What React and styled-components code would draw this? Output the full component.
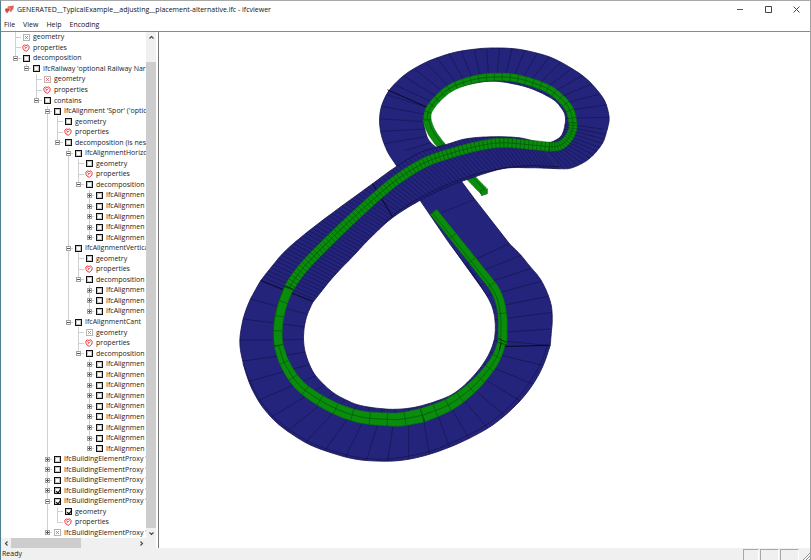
import React from "react";
import styled, { createGlobalStyle, css } from "styled-components";

const GlobalStyle = createGlobalStyle`
  * { box-sizing: border-box; }
  body { margin: 0; background: #fff; }
`;

const Window = styled.main`
  display: flex;
  flex-direction: column;
  height: 100vh;
  min-height: 520px;
  overflow: hidden;
  background: #fff;
  color: #222;
  font: 7px/10px "Open Sans", "Noto Sans", sans-serif;
  border-top: 1px solid #a8a8a8;
  border-left: 1px solid #4e7f95;
  border-right: 1px solid #a0a0a0;
`;
const TitleBar = styled.header`
  display: flex;
  align-items: center;
  flex: 0 0 17px;
  padding-left: 4px;
`;
const Title = styled.h1`
  flex: 1;
  margin: 0 0 0 3px;
  font-size: 7px;
  line-height: 12px;
  font-weight: 400;
  color: #111;
  white-space: nowrap;
`;
const WindowButton = styled.button`
  display: flex;
  align-items: center;
  justify-content: center;
  width: 28px;
  height: 16px;
  padding: 0;
  border: 0;
  background: none;
`;
const MenuBar = styled.nav`
  display: flex;
  flex: 0 0 13px;
  gap: 6px;
  padding-left: 2px;
`;
const MenuButton = styled.button`
  padding: 0 1px;
  border: 0;
  background: none;
  color: #111;
  font: inherit;
  line-height: 12px;
`;
const Body = styled.div`
  display: flex;
  flex: 1;
  min-height: 0;
`;
const Sidebar = styled.aside`
  display: grid;
  grid-template: minmax(0, 1fr) 10px / minmax(0, 1fr) 10px;
  width: 157px;
  padding-right: 2px;
  border-top: 1px solid #8a8a8a;
`;
const Tree = styled.ul`
  display: flex;
  flex-direction: column;
  min-width: 0;
  margin: 0;
  padding: 0 0 0 9px;
  list-style: none;
  overflow: hidden;
`;
const Row = styled.li`
  display: flex;
  flex: 1;
  min-height: 0;
  align-items: stretch;
`;
const Guide = styled.span`
  display: flex;
  flex: none;
  align-items: center;
  justify-content: center;
  width: ${(p) => p.$width}px;
  background-repeat: no-repeat;
  ${(p) => {
    const ink = "linear-gradient(#d0d0d0, #d0d0d0)";
    if (p.$kind === "none") return "";
    const height = p.$kind === "ell" ? "50%" : "100%";
    if (p.$kind === "line")
      return css`background-image: ${ink}; background-size: 1px 100%; background-position: 5px 0;`;
    return css`
      background-image: ${ink}, ${ink};
      background-size: 1px ${height}, 6px 1px;
      background-position: 5px 0, 5px 50%;
    `;
  }}
`;
const Expander = styled.button`
  display: block;
  width: 5px;
  height: 5px;
  padding: 0;
  border: 1px solid #a2a2a2;
  background-color: #fff;
  background-image: linear-gradient(#555, #555), linear-gradient(#555, #555);
  background-position: center;
  background-repeat: no-repeat;
  background-size: 3px 1px, ${(p) => (p.$open ? "0 0" : "1px 3px")};
`;
const NodeLabel = styled.label`
  display: flex;
  align-items: center;
  color: #222;
  white-space: nowrap;
`;
const IconCell = styled.span`
  display: flex;
  align-items: center;
  justify-content: center;
  width: 10px;
  margin-right: 2px;
`;
const Tick = styled.input`
  appearance: none;
  position: relative;
  width: 7px;
  height: 7px;
  margin: 0;
  border: 1px solid #111;
  box-shadow: inset 0 0 0 1px #c4c4c4;
  background: #fff;
  &:checked::after {
    content: "";
    position: absolute;
    left: 2px;
    top: 0;
    width: 2px;
    height: 4px;
    border: solid #000;
    border-width: 0 1px 1px 0;
    transform: rotate(40deg);
  }
`;
const ScrollBar = styled.div`
  display: flex;
  flex-direction: ${(p) => (p.$vertical ? "column" : "row")};
  background: #f0f0f0;
  grid-column: ${(p) => (p.$vertical ? 2 : "1 / 2")};
`;
const ScrollButton = styled.button`
  display: flex;
  flex: 0 0 10px;
  align-items: center;
  justify-content: center;
  padding: 0;
  border: 0;
  background: none;
`;
const Track = styled.div`
  display: flex;
  flex: 1;
  flex-direction: inherit;
`;
const Thumb = styled.div`
  flex: 0 0 ${(p) => p.$size};
  margin-top: ${(p) => p.$before || 0};
  background: #cdcdcd;
`;
const Corner = styled.div`
  background: #f0f0f0;
`;
const Viewport = styled.section`
  flex: 1;
  min-width: 0;
  border-top: 1px solid #8a8a8a;
  border-left: 1px solid #777;
  background: #fff;
`;
const Scene = styled.svg`
  display: block;
  width: 100%;
  height: 100%;
`;
const StatusBar = styled.footer`
  display: flex;
  flex: 0 0 12px;
  align-items: stretch;
  background: #f0f0f0;
  padding: 1px 0 0 1px;
  color: #222;
`;
const StatusText = styled.span`
  flex: 1;
`;
const StatusPane = styled.span`
  width: ${(p) => p.$width}px;
  margin-right: 1px;
  border-top: 1px solid #a8a8a8;
  border-left: 1px solid #a8a8a8;
  border-right: 1px solid #fff;
`;

const AppIcon = () => (
  <svg width="9" height="9" viewBox="0 0 9 9" aria-hidden="true">
    <path d="M2.6 1.6 8.8.6 8.3 4.6 6.9 4.9 6.4 6.9 5.3 7 5.2 5.4 3 5.6z" fill="#e0604c" />
    <path d="M.3 3.6 4.6 3.2 4.3 6.2 2.9 6.5 2.5 8.2 1.4 8.3 1.3 6.6.2 6.5z" fill="#c8483a" />
    <path d="M2.4 3.2 5 2.9 4.7 5.6" fill="none" stroke="#f7b6a8" strokeWidth=".6" />
  </svg>
);
const BlockedIcon = () => (
  <svg width="7" height="7" viewBox="0 0 7 7" aria-hidden="true">
    <rect x=".5" y=".5" width="6" height="6" fill="#fff" stroke="#b5b5b5" />
    <path d="M2.2 2.2 4.8 4.8M4.8 2.2 2.2 4.8" stroke="#f05858" strokeWidth="1" />
  </svg>
);
const PropertiesIcon = () => (
  <svg width="8" height="8" viewBox="0 0 8 8" fill="none" stroke="#f0383c" aria-hidden="true">
    <path d="M.8 2.2 2.3.9 4 1.5 5.7.8 7.2 2.6 6.8 5.2 4.5 7.2 2.4 6.6 1.1 4.5z" strokeWidth="1" />
    <path d="M2.2 2.3 4 3.9 5.7 2.4M4 3.9 2.5 5" strokeWidth=".8" />
  </svg>
);
const Chevron = ({ d }) => (
  <svg width="7" height="7" viewBox="0 0 7 7" fill="none" stroke="#444" strokeWidth="1.1" aria-hidden="true">
    <path d={d} />
  </svg>
);

/* Each entry: depth, label, icon, expander state, last child flag. */
const row = (depth, label, icon = "box", open = null, last = false) => ({ depth, label, icon, open, last });
const leaves = (depth, icon, last = false) => [
  row(depth, "geometry", icon),
  row(depth, "properties", "props", null, last),
];
const many = (count, depth, label) =>
  Array.from({ length: count }, (_, i) => row(depth, label, "box", false, i === count - 1));

const rows = [
  ...leaves(0, "blocked"),
  row(0, "decomposition", "box", true, true),
  row(1, "IfcRailway 'optional Railway Nar", "box", true, true),
  ...leaves(2, "blocked"),
  row(2, "contains", "box", true, true),
  row(3, "IfcAlignment 'Spor' ('optic", "box", true),
  ...leaves(4, "box"),
  row(4, "decomposition (is nest", "box", true, true),
  row(5, "IfcAlignmentHorizo", "box", true),
  ...leaves(6, "box"),
  row(6, "decomposition", "box", true, true),
  ...many(5, 7, "IfcAlignmen"),
  row(5, "IfcAlignmentVertica", "box", true),
  ...leaves(6, "box"),
  row(6, "decomposition", "box", true, true),
  ...many(3, 7, "IfcAlignmen"),
  row(5, "IfcAlignmentCant", "box", true, true),
  ...leaves(6, "blocked"),
  row(6, "decomposition", "box", true, true),
  ...many(9, 7, "IfcAlignmen"),
  row(3, "IfcBuildingElementProxy '", "box", false),
  row(3, "IfcBuildingElementProxy '", "box", false),
  row(3, "IfcBuildingElementProxy '", "box", false),
  row(3, "IfcBuildingElementProxy '", "checked", false),
  row(3, "IfcBuildingElementProxy '", "checked", true),
  ...leaves(4, "checked", true),
  row(3, "IfcBuildingElementProxy '", "blocked", false, true),
];

const continues = (index, depth) => {
  for (let i = index + 1; i < rows.length; i++) {
    if (rows[i].depth < depth) return false;
    if (rows[i].depth === depth) return true;
  }
  return false;
};

const TreeRow = ({ item, index }) => {
  const id = `node-${index}`;
  const ticked = item.icon === "checked";
  return (
    <Row>
      {Array.from({ length: item.depth + 1 }, (_, d) => {
        const own = d === item.depth;
        const kind = own ? (item.last ? "ell" : "tee") : continues(index, d) ? "line" : "none";
        return (
          <Guide key={d} $kind={kind} $width={d % 2 ? 10 : 11}>
            {own && item.open !== null && (
              <Expander type="button" $open={item.open} aria-label={item.open ? "Collapse" : "Expand"} />
            )}
          </Guide>
        );
      })}
      <NodeLabel htmlFor={id}>
        <IconCell>
          {item.icon === "blocked" && <BlockedIcon />}
          {item.icon === "props" && <PropertiesIcon />}
          {(item.icon === "box" || ticked) && <Tick id={id} type="checkbox" defaultChecked={ticked} />}
        </IconCell>
        {item.label}
      </NodeLabel>
    </Row>
  );
};

/* Smooth curve through the points, resampled at equal arc lengths. */
const resample = (points, count) => {
  const dense = [];
  for (let i = 0; i < points.length - 1; i++) {
    const p0 = points[Math.max(0, i - 1)];
    const p1 = points[i];
    const p2 = points[i + 1];
    const p3 = points[Math.min(points.length - 1, i + 2)];
    for (let k = 0; k < 16; k++) {
      const t = k / 16;
      dense.push([0, 1].map((a) =>
        0.5 * (2 * p1[a] + (p2[a] - p0[a]) * t +
          (2 * p0[a] - 5 * p1[a] + 4 * p2[a] - p3[a]) * t * t +
          (3 * p1[a] - p0[a] - 3 * p2[a] + p3[a]) * t * t * t)));
    }
  }
  dense.push(points[points.length - 1]);
  const lengths = [0];
  for (let i = 1; i < dense.length; i++)
    lengths.push(lengths[i - 1] + Math.hypot(dense[i][0] - dense[i - 1][0], dense[i][1] - dense[i - 1][1]));
  const total = lengths[lengths.length - 1];
  let j = 0;
  return Array.from({ length: count + 1 }, (_, i) => {
    const goal = (total * i) / count;
    while (j < dense.length - 2 && lengths[j + 1] < goal) j++;
    const f = (goal - lengths[j]) / (lengths[j + 1] - lengths[j] || 1);
    return [0, 1].map((a) => dense[j][a] + (dense[j + 1][a] - dense[j][a]) * f);
  });
};
const trace = (pts) => pts.map((p) => p.map((v) => v.toFixed(1)).join(" ")).join("L");

const Ribbon = ({ outer, inner, ribs, fill = "#24247c", edge = "#12124c" }) => {
  const fine = Math.max(1, Math.ceil(72 / ribs));
  const a = resample(outer, ribs * fine);
  const b = resample(inner, ribs * fine);
  const lines = a.map((p, i) => (i % fine === 0 ? `M${trace([p, b[i]])}` : "")).join("");
  return (
    <g>
      <path d={`M${trace(a)}L${trace([...b].reverse())}Z`} fill={fill} />
      <path d={`M${trace(a)}M${trace(b)}`} fill="none" stroke={edge} strokeWidth=".8" />
      <path d={lines} stroke="#080830" strokeOpacity=".65" strokeWidth=".6" />
    </g>
  );
};

/* Square-section bar that follows a centre line; widths taper between the ends. */
const Bar = ({ center, from, to, ribs, seam = 0 }) => {
  const n = ribs * Math.max(1, Math.ceil(60 / ribs));
  const c = resample(center, n);
  const side = (s) =>
    c.map((p, i) => {
      const q = c[Math.min(n, i + 1)];
      const r = c[Math.max(0, i - 1)];
      const len = Math.hypot(q[0] - r[0], q[1] - r[1]) || 1;
      const w = ((from + ((to - from) * i) / n) / 2) * s;
      return [p[0] - ((q[1] - r[1]) / len) * w, p[1] + ((q[0] - r[0]) / len) * w];
    });
  const a = side(1);
  const b = side(-1);
  const step = n / ribs;
  return (
    <g>
      <path d={`M${trace(a)}L${trace([...b].reverse())}Z`} fill="#0a8c0d" stroke="#07700b" strokeWidth=".6" />
      <path
        d={a.map((p, i) => (i % step === 0 ? `M${trace([p, b[i]])}` : "")).join("")}
        stroke="#023804" strokeWidth=".6" strokeOpacity=".7"
      />
      <path d={`M${trace(side(seam))}`} fill="none" stroke="#034a06" strokeWidth=".6" />
    </g>
  );
};

const Model = () => (
  <Scene viewBox="159 31 651 517" preserveAspectRatio="xMinYMin meet" role="img" aria-label="Railway alignment model">
    <Ribbon
      ribs={28}
      outer={[[397, 165], [388, 151], [382, 135], [380, 120], [382, 105], [390, 89], [405, 74], [423, 63], [440, 56], [457, 51], [477, 48], [495, 47], [517, 48], [537, 52], [553, 57], [570, 66], [585, 76], [597, 88], [606, 101], [610, 117], [608, 129]]}
      inner={[[437, 147], [429, 139], [425, 127], [424, 117], [426, 110], [431, 104], [442, 97], [457, 87], [483, 81], [503, 81], [530, 87], [553, 98], [562, 107], [566, 115], [566, 125]]}
    />
    <path d="M388 151L397 165L448 240L493 303L510 243L475 198L437 147Z" fill="#24247c" />
    <path d="M397 165L448 240L484 289M437 147L475 198L510 243" fill="none" stroke="#12124c" strokeWidth=".8" />
    <path d="M442 212L475 199" stroke="#080830" strokeOpacity=".6" strokeWidth=".6" />
    <Ribbon
      ribs={7}
      outer={[[510, 243], [521, 254], [530, 265], [540, 277], [547, 290], [552, 305], [553, 320], [552, 333], [551, 345]]}
      inner={[[467, 263], [483, 288], [491, 302], [495, 315], [496, 330], [494, 345]]}
    />
    <Ribbon
      ribs={23}
      outer={[[261, 280], [250, 300], [243, 320], [240, 343], [244, 365], [251, 386], [263, 407], [280, 425], [307, 443], [333, 453], [356, 459], [380, 461], [403, 460], [427, 455], [450, 447], [470, 438], [490, 427], [507, 414], [523, 398], [535, 382], [544, 365], [551, 345]]}
      inner={[[313, 302], [307, 316], [304, 332], [305, 350], [312, 369], [320, 380], [333, 392], [347, 400], [360, 405], [378, 408], [397, 409], [420, 406], [447, 397], [460, 389], [471, 379], [482, 366], [490, 353], [495, 340]]}
    />
    <path
      d={`M${trace(resample([[243, 363], [251, 383], [263, 404], [281, 423], [308, 441], [334, 451], [357, 457], [381, 459], [403, 457], [427, 452], [449, 444], [488, 424], [520, 396], [541, 364], [548, 345]], 60))}`}
      fill="none" stroke="#101046" strokeWidth=".6"
    />
    <path d="M506 346L550 345M388 89L429 107" stroke="#080820" strokeWidth="1" />
    <Bar ribs={3} from={8} to={8} center={[[427, 118], [432, 131], [442, 145], [456, 161], [484, 190]]} seam={-0.4} />
    <path d="M481 190L482 195L488 193L488 188Z" fill="#0a8c0d" stroke="#07570b" strokeWidth=".6" />
    <Bar ribs={24} from={7} to={8} center={[[428, 119], [429, 110], [438, 98], [453, 86], [477, 78], [500, 76], [520, 78], [547, 87], [562, 98], [571, 110], [574, 125]]} />
    <Bar ribs={5} from={8} to={9} center={[[434, 211], [458, 241], [481, 270], [497, 292], [503, 315], [503, 344]]} seam={0.4} />
    <Ribbon
      ribs={14}
      outer={[[608, 129], [603, 143], [590, 158], [573, 167], [560, 168]]}
      inner={[[566, 123], [564, 131], [560, 137], [550, 142], [540, 142]]}
    />
    <Ribbon
      ribs={80}
      outer={[[560, 168], [530, 167], [503, 168], [470, 178], [444, 188], [420, 200], [393, 217], [370, 238], [353, 256], [333, 277], [313, 302]]}
      inner={[[540, 142], [520, 137], [493, 136], [467, 138], [446, 144], [420, 152], [395, 167], [373, 183], [340, 207], [307, 232], [283, 253], [261, 280]]}
    />
    <path d="M560 166Q504 160 452 182Q407 201 386 221" fill="none" stroke="#101046" strokeWidth=".8" />
    <path d="M373 183L393 216M261 280L313 301" stroke="#080820" strokeWidth="1" />
    <Bar ribs={14} from={8} to={9} center={[[574, 122], [573, 130], [568, 139], [560, 145], [550, 146]]} />
    <Bar ribs={76} from={9} to={10} center={[[550, 146], [530, 144], [503, 142], [480, 145], [453, 152], [427, 161], [403, 175], [380, 193], [343, 227], [310, 260], [296, 277], [289, 288]]} />
    <Bar ribs={4} from={9} to={9} center={[[289, 288], [283, 303], [279, 320], [278, 335], [279, 345]]} seam={1} />
    <Bar ribs={10} from={9} to={14} center={[[279, 345], [285, 363], [298, 383], [317, 398], [340, 410], [363, 417], [387, 419], [402, 419], [423, 415]]} />
    <Bar ribs={8} from={14} to={8} center={[[423, 415], [450, 404], [473, 387], [490, 368], [498, 355], [502, 343]]} />
    <path d="M285 285L294 289M499 338L507 342M502 342L500 350" stroke="#022804" strokeWidth="1" />
  </Scene>
);

export default function App() {
  return (
    <>
      <GlobalStyle />
      <Window>
        <TitleBar>
          <AppIcon />
          <Title>GENERATED__TypicalExample__adjusting__placement-alternative.ifc - ifcviewer</Title>
          <WindowButton type="button" aria-label="Minimize">
            <svg width="7" height="7"><path d="M0 3.5H6" stroke="#555" /></svg>
          </WindowButton>
          <WindowButton type="button" aria-label="Maximize">
            <svg width="7" height="7"><path d="M.5.5H6.5V6.5H.5Z" fill="none" stroke="#444" /></svg>
          </WindowButton>
          <WindowButton type="button" aria-label="Close">
            <svg width="7" height="7"><path d="M.5.5 6.5 6.5M6.5.5.5 6.5" stroke="#444" /></svg>
          </WindowButton>
        </TitleBar>
        <MenuBar>
          {["File", "View", "Help", "Encoding"].map((name) => (
            <MenuButton type="button" key={name}>{name}</MenuButton>
          ))}
        </MenuBar>
        <Body>
          <Sidebar>
            <Tree>
              {rows.map((item, i) => <TreeRow key={i} item={item} index={i} />)}
            </Tree>
            <ScrollBar $vertical>
              <ScrollButton type="button" aria-label="Scroll up"><Chevron d="M1.5 4.5 3.5 2.5 5.5 4.5" /></ScrollButton>
              <Track><Thumb $size="calc(100% - 20px)" $before="20px" /></Track>
              <ScrollButton type="button" aria-label="Scroll down"><Chevron d="M1.5 2.5 3.5 4.5 5.5 2.5" /></ScrollButton>
            </ScrollBar>
            <ScrollBar>
              <ScrollButton type="button" aria-label="Scroll left"><Chevron d="M4.5 1.5 2.5 3.5 4.5 5.5" /></ScrollButton>
              <Track><Thumb $size="56%" /></Track>
              <ScrollButton type="button" aria-label="Scroll right"><Chevron d="M2.5 1.5 4.5 3.5 2.5 5.5" /></ScrollButton>
            </ScrollBar>
            <Corner />
          </Sidebar>
          <Viewport><Model /></Viewport>
        </Body>
        <StatusBar>
          <StatusText>Ready</StatusText>
          <StatusPane $width={16} />
          <StatusPane $width={19} />
          <StatusPane $width={19} />
          <svg width="10" height="11" stroke="#999" aria-hidden="true">
            <path d="M3 11 10 4M6 11 10 7M9 11 10 10" />
          </svg>
        </StatusBar>
      </Window>
    </>
  );
}
